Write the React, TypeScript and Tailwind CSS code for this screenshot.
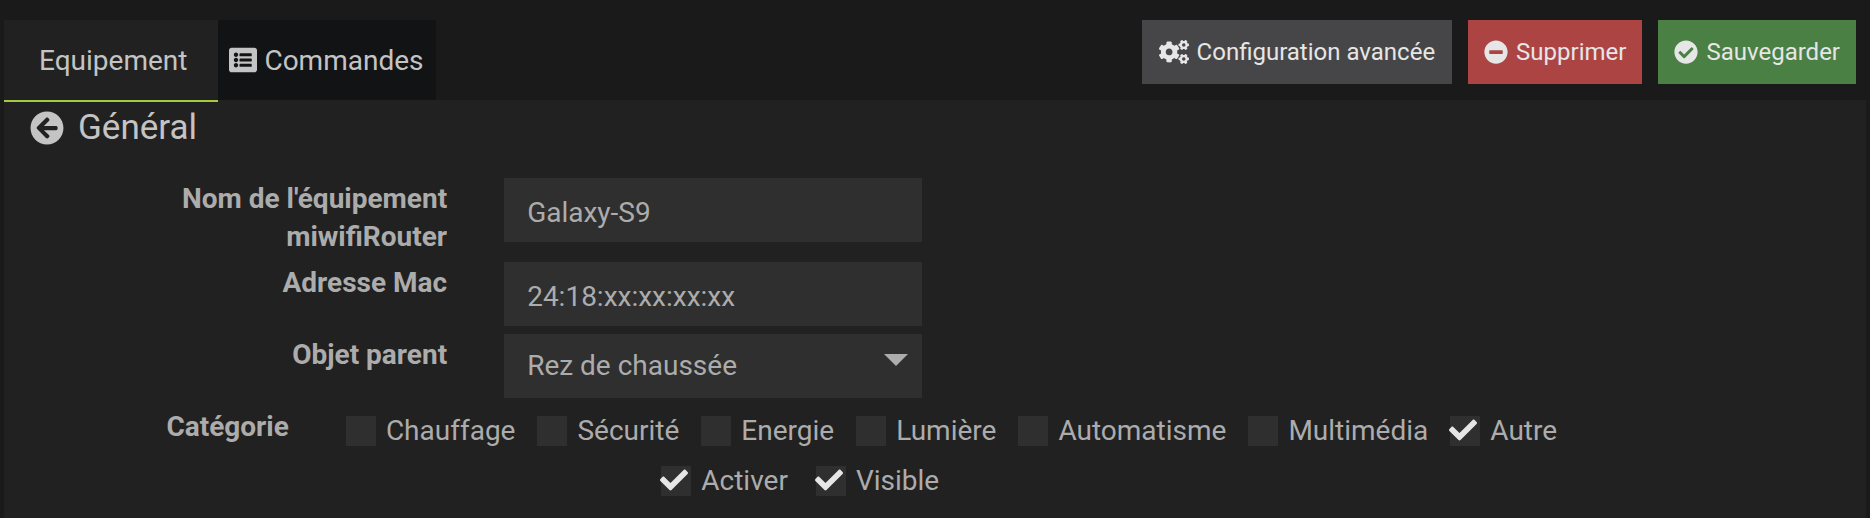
import React, { useState } from "react";
import {
  FaArrowCircleLeft,
  FaCheck,
  FaCheckCircle,
  FaCogs,
  FaListAlt,
  FaMinusCircle,
} from "react-icons/fa";

const categories = [
  { name: "Chauffage", checked: false },
  { name: "Sécurité", checked: false },
  { name: "Energie", checked: false },
  { name: "Lumière", checked: false },
  { name: "Automatisme", checked: false },
  { name: "Multimédia", checked: false },
  { name: "Autre", checked: true },
];

function Check({ name, initial }: { name: string; initial: boolean }) {
  const [checked, setChecked] = useState(initial);
  return (
    <label className="flex items-center gap-2.5 leading-[30px]">
      <span className="relative flex size-[30px] shrink-0">
        <input
          type="checkbox"
          checked={checked}
          onChange={(e) => setChecked(e.target.checked)}
          className="size-full appearance-none bg-[#2f2f2f]"
        />
        {checked && (
          <FaCheck className="pointer-events-none absolute -left-px top-0 size-7 text-[#e6e6e6]" />
        )}
      </span>
      {name}
    </label>
  );
}

const labelClass =
  "w-[23.8%] shrink-0 pl-32 pt-0.5 text-right font-bold leading-[38px]";
const fieldClass =
  "h-16 w-full appearance-none rounded-none bg-[#2f2f2f] px-[23px] text-[#acacac] outline-none";

export default function App() {
  return (
    <div className="flex min-h-screen flex-col bg-[#1a1a1a] px-1 pt-5 font-['Roboto',sans-serif] text-[28px] text-[#acacac]">
      <header className="z-10 flex items-start justify-between">
        <div role="tablist" className="flex h-20 items-start text-[#c4c4c4]">
          <button
            role="tab"
            aria-selected="true"
            className="flex h-[82px] items-center border-b-2 border-[#a2c93f] bg-[#212121] pl-[35px] pr-[31px] pt-0.5"
          >
            Equipement
          </button>
          <button
            role="tab"
            aria-selected="false"
            className="flex h-20 items-center gap-[7px] bg-[#121315] pl-[11px] pr-3 pt-0.5"
          >
            <FaListAlt className="mb-0.5 size-7" />
            Commandes
          </button>
        </div>
        <div className="flex gap-4 pr-2.5 text-2xl text-[#e6e6e6]">
          <button className="flex h-16 items-center gap-2 bg-[#464648] px-[17px] pb-px">
            <FaCogs className="h-6 w-[30px]" />
            Configuration avancée
          </button>
          <button className="flex h-16 items-center gap-2 bg-[#ad4444] px-4 pb-px">
            <FaMinusCircle className="size-6" />
            Supprimer
          </button>
          <button className="flex h-16 items-center gap-2 bg-[#4a8044] px-4 pb-px">
            <FaCheckCircle className="size-6" />
            Sauvegarder
          </button>
        </div>
      </header>

      <main className="grow bg-[#212121] pt-2">
        <h1 className="flex items-center gap-3.5 pl-[26px] text-[35px] leading-10 text-[#c4c4c4]">
          <a href="#" aria-label="Retour">
            <FaArrowCircleLeft className="size-[34px]" />
          </a>
          Général
        </h1>

        <form className="pt-[30px]">
          <div className="flex gap-[57px]">
            <label htmlFor="name" className={labelClass}>
              Nom de l'équipement miwifiRouter
            </label>
            <div className="w-[22.45%]">
              <input id="name" defaultValue="Galaxy-S9" className={`${fieldClass} pt-1`} />
            </div>
          </div>
          <div className="flex gap-[57px] pt-1.5">
            <label htmlFor="mac" className={labelClass}>
              Adresse Mac
            </label>
            <div className="w-[22.45%]">
              <input id="mac" defaultValue="24:18:xx:xx:xx:xx" className={`${fieldClass} pt-1`} />
            </div>
          </div>
          <div className="flex gap-[57px] pt-2">
            <label htmlFor="parent" className={labelClass}>
              Objet parent
            </label>
            <div className="relative w-[22.45%]">
              <select id="parent" className={fieldClass}>
                <option>Rez de chaussée</option>
              </select>
              <svg
                viewBox="0 0 24 12"
                className="pointer-events-none absolute right-3.5 top-5 h-3 w-6"
                fill="currentColor"
              >
                <path d="M0 0h24L12 12z" />
              </svg>
            </div>
          </div>
          <div className="flex gap-[57px] pt-2">
            <div className="w-[15.3%] shrink-0 pt-0.5 text-right font-bold leading-[38px]">
              Catégorie
            </div>
            <div className="flex flex-wrap gap-x-[22px] pt-2.5">
              {categories.map((c) => (
                <Check key={c.name} name={c.name} initial={c.checked} />
              ))}
            </div>
          </div>
          <div className="flex gap-7 pl-[35.3%] pt-5">
            <Check name="Activer" initial />
            <Check name="Visible" initial />
          </div>
        </form>
      </main>
    </div>
  );
}
